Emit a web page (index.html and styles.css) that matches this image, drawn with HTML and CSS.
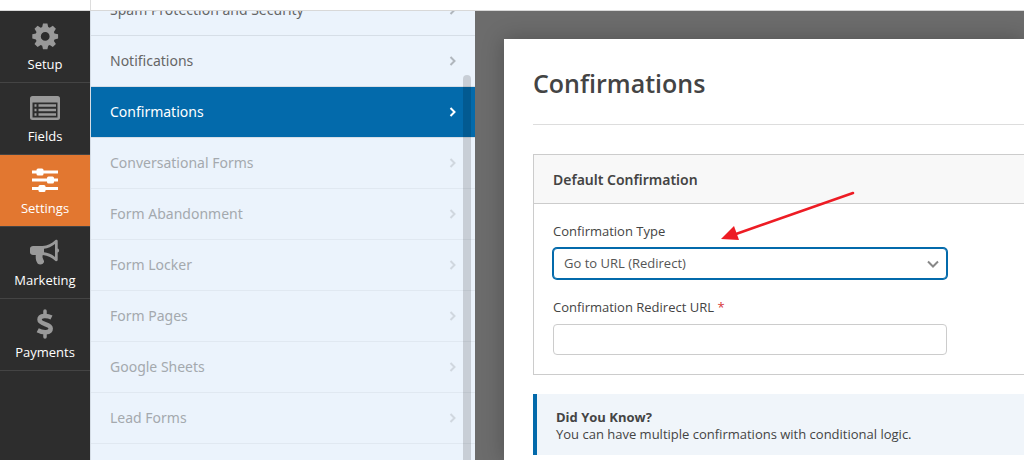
FILE: index.html
```html
<!DOCTYPE html>
<html lang="en">
<head>
<meta charset="utf-8">
<title>Confirmations</title>
<link rel="stylesheet" href="styles.css">
</head>
<body>
<div class="builder">
  <header class="topbar"><div class="topbar-logo"></div></header>
  <div class="workspace">
    <nav class="rail">
      <a class="rail-item" href="#">
        <svg class="rail-icon" viewBox="0 0 30 30" fill="currentColor"><path fill-rule="evenodd" d="M13 2.500h4.400l.8 3.600 1.500.6 3.100-2 3.100 3.100-2 3.100.6 1.500 3.600.8v4.400l-3.600.8-.6 1.500 2 3.100-3.100 3.100-3.100-2-1.500.6-.8 3.600H13l-.8-3.600-1.500-.6-3.100 2-3.100-3.100 2-3.100-.6-1.500-3.600-.8v-4.400l3.600-.8.6-1.500-2-3.100 3.100-3.100 3.100 2 1.500-.6zM15.200 11a4.400 4.400 0 1 0 0 8.800 4.400 4.400 0 0 0 0-8.800z"/></svg>
        <span>Setup</span>
      </a>
      <a class="rail-item" href="#">
        <svg class="rail-icon" viewBox="0 0 30 30"><rect x="0" y="3" width="30" height="24" rx="2.500" fill="currentColor"/><path d="M2.500 9.500h25v15h-25z" fill="#2d2d2d"/><path d="M4.500 12.500h2M4.500 17h2M4.500 21.500h2M8.500 12.500h17.500M8.500 17h17.500M8.500 21.500h17.500" stroke="currentColor" stroke-width="2.400"/></svg>
        <span>Fields</span>
      </a>
      <a class="rail-item rail-item-active" href="#">
        <svg class="rail-icon" viewBox="0 0 30 30" fill="currentColor"><path d="M2 5.500h26v3H2zM2 13.500h26v3H2zM2 22h26v3H2z"/><rect x="6.500" y="3.500" width="7" height="7" rx="1.500"/><rect x="17" y="11.500" width="7" height="7" rx="1.500"/><rect x="8.500" y="20" width="7" height="7" rx="1.500"/></svg>
        <span>Settings</span>
      </a>
      <a class="rail-item" href="#">
        <svg class="rail-icon" viewBox="0 0 30 30" fill="currentColor"><path fill-rule="evenodd" d="M3 9h9.500c5 0 9-2.500 13-6 1-.6 2.200 0 2.200 1v7.500c1.900.8 1.900 3.200 0 4V23c0 1-1.200 1.500-2.200 1-3.500-3.500-7.500-5.500-12.700-6-.8 2.500.2 3.500 1 5.500.7 1.500-.3 2.300-1 3.300-1.500 1-4 .7-5 0C5.800 24 5.500 21.500 5.800 18H3c-1.500 0-3-1-3-2.500v-4C0 10 1.500 9 3 9zm11 2.700v3.600c4 .4 7.500 1.800 11 4.600V7c-3.500 2.800-7 4.300-11 4.700z"/></svg>
        <span>Marketing</span>
      </a>
      <a class="rail-item" href="#">
        <svg class="rail-icon" viewBox="0 0 30 30" fill="none" stroke="currentColor"><path stroke-width="4.500" d="M21.500 8.500c-4-2-12-2.500-12 2 0 5.300 11.200 3.800 11.200 9 0 5-8 4.500-13 1.800"/><path stroke-width="3.500" stroke-linecap="round" d="M15 2v5M15 23v5"/></svg>
        <span>Payments</span>
      </a>
    </nav>
    <aside class="sidebar">
      <div class="section-list">
        <a class="section" href="#"><span>Spam Protection and Security</span><svg class="chevron" viewBox="0 0 8 10"><path d="M1.500 1l4 4-4 4"/></svg></a>
        <a class="section" href="#"><span>Notifications</span><svg class="chevron" viewBox="0 0 8 10"><path d="M1.500 1l4 4-4 4"/></svg></a>
        <a class="section section-active" href="#"><span>Confirmations</span><svg class="chevron" viewBox="0 0 8 10"><path d="M1.500 1l4 4-4 4"/></svg></a>
        <a class="section section-locked" href="#"><span>Conversational Forms</span><svg class="chevron" viewBox="0 0 8 10"><path d="M1.500 1l4 4-4 4"/></svg></a>
        <a class="section section-locked" href="#"><span>Form Abandonment</span><svg class="chevron" viewBox="0 0 8 10"><path d="M1.500 1l4 4-4 4"/></svg></a>
        <a class="section section-locked" href="#"><span>Form Locker</span><svg class="chevron" viewBox="0 0 8 10"><path d="M1.500 1l4 4-4 4"/></svg></a>
        <a class="section section-locked" href="#"><span>Form Pages</span><svg class="chevron" viewBox="0 0 8 10"><path d="M1.500 1l4 4-4 4"/></svg></a>
        <a class="section section-locked" href="#"><span>Google Sheets</span><svg class="chevron" viewBox="0 0 8 10"><path d="M1.500 1l4 4-4 4"/></svg></a>
        <a class="section section-locked" href="#"><span>Lead Forms</span><svg class="chevron" viewBox="0 0 8 10"><path d="M1.500 1l4 4-4 4"/></svg></a>
      </div>
      <div class="scroll-thumb"></div>
    </aside>
    <main class="stage">
      <div class="panel">
        <h1 class="panel-title">Confirmations</h1>
        <section class="card">
          <h2 class="card-title">Default Confirmation</h2>
          <div class="card-body">
            <div class="field">
              <label for="type">Confirmation Type</label>
              <div class="select-wrap">
                <select class="control control-focus" id="type"><option>Go to URL (Redirect)</option></select>
                <svg class="select-arrow" viewBox="0 0 12 8"><path d="M1 1.500l5 5 5-5"/></svg>
              </div>
            </div>
            <div class="field">
              <label for="url">Confirmation Redirect URL <span class="required">*</span></label>
              <input class="control" id="url" type="text">
            </div>
          </div>
        </section>
        <aside class="tip">
          <strong>Did You Know?</strong>
          <p>You can have multiple confirmations with conditional logic.</p>
        </aside>
      </div>
      <svg class="pointer" viewBox="0 0 136 52"><path d="M132 3L15 44" stroke="#ed1c24" stroke-width="2.500" stroke-linecap="round"/><path d="M0 49L13 36l5 14z" fill="#ed1c24"/></svg>
    </main>
  </div>
</div>
</body>
</html>
```

FILE: styles.css
```css
* { box-sizing: border-box; }
body {
  margin: 0;
  font-family: "Segoe UI", "Open Sans", "Noto Sans", sans-serif;
  font-size: 13px;
  line-height: 17px;
  color: #444;
}
a { text-decoration: none; color: inherit; }
.builder { display: flex; flex-direction: column; height: 100vh; overflow: hidden; background: #fff; }
.topbar { flex: none; height: 11px; border-bottom: 1px solid #d8d8d8; }
.topbar-logo { width: 91px; height: 10px; border-right: 1px solid #ddd; }
.workspace { flex: 1; min-height: 0; display: flex; }

.rail { flex: none; width: 90px; background: #2d2d2d; }
.rail-item {
  display: flex;
  flex-direction: column;
  align-items: center;
  gap: 4px;
  height: 72px;
  padding-top: 10px;
  border-bottom: 1px solid #444;
  color: #999;
}
.rail-item span { color: #fff; line-height: 18px; }
.rail-icon { width: 30px; height: 30px; }
.rail-item-active { background: #e27730; color: #fff; }

.sidebar {
  position: relative;
  flex: none;
  width: 385px;
  overflow: hidden;
  background: #ebf3fc;
  border-left: 1px solid #d5dde6;
}
.section-list { margin-top: -26px; }
.section {
  display: flex;
  align-items: center;
  justify-content: space-between;
  height: 51px;
  padding: 0 18px 0 19px;
  border-bottom: 1px solid #d6dee7;
  font-family: "Segoe UI", "Noto Sans", "Open Sans", sans-serif;
  font-size: 14px;
  line-height: 22px;
  color: #666;
}
.chevron { width: 8px; height: 10px; fill: none; stroke: #b0b6bd; stroke-width: 2; }
.section-active { background: #036aab; color: #fff; }
.section-active .chevron { stroke: #fff; }
.section-locked { color: #a4a9ae; border-bottom-color: #e0e8f1; }
.section-locked .chevron { stroke: #d0d7df; }
.scroll-thumb {
  position: absolute;
  top: 64px;
  right: 4px;
  bottom: 0;
  width: 8px;
  border-radius: 4px 4px 0 0;
  background: rgba(0, 0, 0, 0.15);
}

.stage {
  position: relative;
  flex: 1;
  min-width: 0;
  padding: 28px 0 0 29px;
  overflow: hidden;
  background: #6c6c6c;
}
.panel {
  min-height: 100%;
  padding: 28px 0 0 29px;
  background: #fff;
  box-shadow: 0 0 20px rgba(0, 0, 0, 0.25);
}
.panel-title {
  margin: 0 0 29px;
  padding-bottom: 25px;
  border-bottom: 1px solid #ddd;
  font-size: 25px;
  line-height: 32px;
  font-weight: 600;
}
.card { border: 1px solid #ccc; border-right: 0; }
.card-title {
  margin: 0;
  padding: 15px 19px 13px;
  background: #f8f8f8;
  border-bottom: 1px solid #ccc;
  font-family: "Segoe UI", "Noto Sans", "Open Sans", sans-serif;
  font-size: 14px;
  line-height: 20px;
  font-weight: 600;
}
.card-body { display: flex; flex-direction: column; gap: 20px; padding: 19px; }
.field { display: flex; flex-direction: column; gap: 8px; width: 100%; max-width: 394px; }
.required { color: #d63638; }
.select-wrap { position: relative; }
.control {
  display: block;
  width: 100%;
  height: 31px;
  padding: 0 10px;
  border: 1px solid #ccc;
  border-radius: 4px;
  background: #fff;
  color: #555;
  font: inherit;
  appearance: none;
  outline: none;
}
.control-focus { border-color: #036aab; box-shadow: 0 0 0 1px #036aab; }
.select-arrow {
  position: absolute;
  top: 12px;
  right: 8px;
  width: 12px;
  height: 8px;
  fill: none;
  stroke: #888;
  stroke-width: 2;
  pointer-events: none;
}
.tip {
  margin-top: 19px;
  padding: 15px 20px 12px 19px;
  border-left: 4px solid #036aab;
  background: #f0f5fa;
}
.tip strong { display: block; }
.tip p { margin: 0; }
.pointer { position: absolute; top: 179px; left: 246px; width: 136px; height: 52px; fill: none; }
```
